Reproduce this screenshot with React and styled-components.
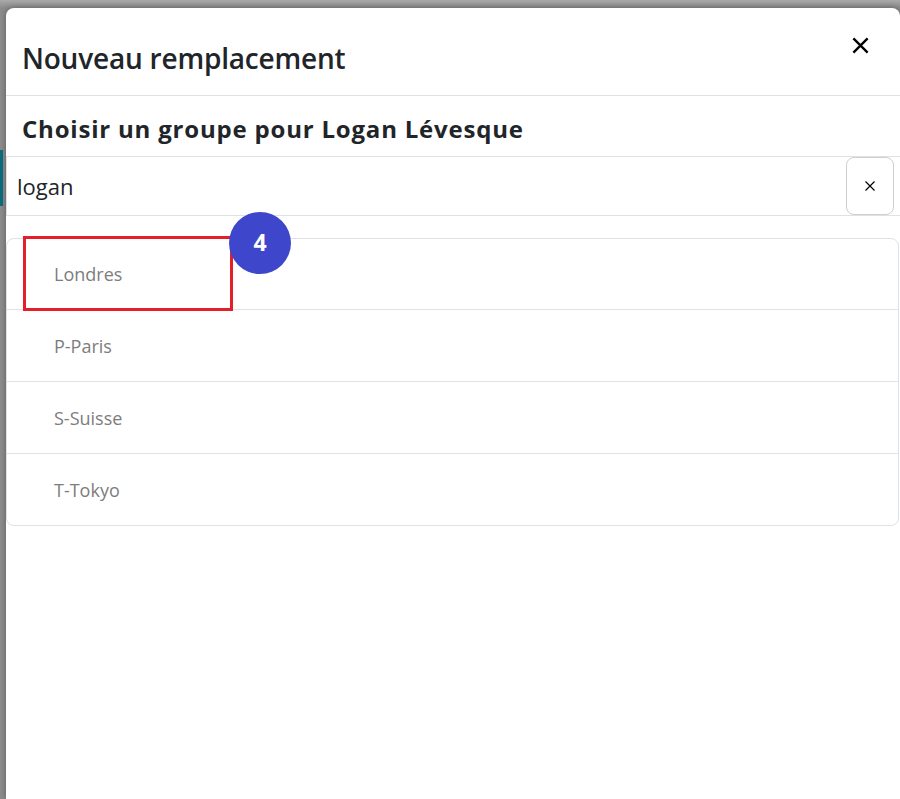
import React from "react";
import styled, { createGlobalStyle } from "styled-components";

const Global = createGlobalStyle`
  html, body { margin: 0; padding: 0; height: 100%; }
  body { font-family: "Open Sans", "Noto Sans", sans-serif; overflow: hidden; }
  #root { height: 100%; }
`;

const Backdrop = styled.div`
  position: relative;
  height: 100vh;
  box-sizing: border-box;
  background: linear-gradient(180deg, #a9a9a9 0px, #8c8c8c 8px);
  padding: 8px 0 0 6px;
  overflow: hidden;
`;

const SideAccent = styled.div`
  position: absolute;
  left: 0;
  top: 150px;
  width: 3px;
  height: 56px;
  background: #0b6d80;
`;

const Modal = styled.div`
  position: relative;
  height: 100%;
  background: #fff;
  border-radius: 8px 8px 0 0;
  box-shadow: 0 0 6px rgba(0, 0, 0, 0.35);
  display: flex;
  flex-direction: column;
`;

const Header = styled.div`
  height: 88px;
  box-sizing: border-box;
  border-bottom: 1px solid #dee2e6;
  display: flex;
  align-items: center;
  justify-content: space-between;
  padding: 0 28px 0 16px;
`;

const Title = styled.h1`
  margin: 0;
  padding-top: 12px;
  font-size: 28px;
  font-weight: 600;
  letter-spacing: -0.2px;
  color: #212529;
`;

const CloseButton = styled.button`
  border: none;
  background: none;
  padding: 0;
  width: 24px;
  height: 24px;
  display: flex;
  align-items: center;
  justify-content: center;
  cursor: pointer;
  margin-top: -12px;
`;

const Subtitle = styled.h2`
  margin: 0;
  height: 60px;
  box-sizing: border-box;
  display: flex;
  align-items: center;
  padding: 4px 16px 0;
  font-size: 24px;
  font-weight: 700;
  letter-spacing: 0.8px;
  color: #212529;
`;

const SearchGroup = styled.div`
  position: relative;
  height: 60px;
  box-sizing: border-box;
  border: 1px solid #dee2e6;
  border-right: none;
  display: flex;
  align-items: center;
`;

const SearchInput = styled.input`
  border: none;
  outline: none;
  flex: 1;
  height: 100%;
  padding: 0 10px;
  font-family: inherit;
  font-size: 22px;
  color: #212529;
  background: transparent;
`;

const ClearButton = styled.button`
  position: absolute;
  right: 6px;
  top: 0;
  width: 48px;
  height: 58px;
  box-sizing: border-box;
  border: 1px solid #cfcfcf;
  border-radius: 8px;
  background: #fff;
  display: flex;
  align-items: center;
  justify-content: center;
  padding: 0;
  cursor: pointer;
`;

const List = styled.ul`
  position: relative;
  list-style: none;
  margin: 22px 1px 0 0;
  padding: 0;
  border: 1px solid #dee2e6;
  border-radius: 8px;
`;

const Item = styled.li`
  height: ${(p) => (p.$first ? "70px" : "72px")};
  box-sizing: border-box;
  display: flex;
  align-items: center;
  padding-left: 47px;
  font-size: 18px;
  color: #7d7d7d;
  border-top: ${(p) => (p.$first ? "none" : "1px solid #dee2e6")};
`;

const Highlight = styled.div`
  position: absolute;
  left: 16px;
  top: -3px;
  width: 210px;
  height: 75px;
  box-sizing: border-box;
  border: 3px solid #e51f2a;
  pointer-events: none;
`;

const Badge = styled.div`
  position: absolute;
  left: 222px;
  top: -27px;
  width: 62px;
  height: 62px;
  border-radius: 50%;
  background: #3e47cb;
  color: #fff;
  font-size: 23px;
  font-weight: 700;
  display: flex;
  align-items: center;
  justify-content: center;
  padding-bottom: 2px;
  box-sizing: border-box;
`;

const XIcon = ({ size, stroke }) => (
  <svg width={size} height={size} viewBox="0 0 16 16" fill="none">
    <path d="M2 2 L14 14 M14 2 L2 14" stroke="#000" strokeWidth={stroke} strokeLinecap="butt" />
  </svg>
);

const groups = ["Londres", "P-Paris", "S-Suisse", "T-Tokyo"];

export default function App() {
  return (
    <>
      <Global />
      <Backdrop>
        <SideAccent />
        <Modal>
          <Header>
            <Title>Nouveau remplacement</Title>
            <CloseButton aria-label="Fermer">
              <XIcon size={19} stroke={2} />
            </CloseButton>
          </Header>
          <Subtitle>Choisir un groupe pour Logan Lévesque</Subtitle>
          <SearchGroup>
            <SearchInput defaultValue="logan" />
            <ClearButton aria-label="Effacer">
              <XIcon size={12} stroke={1.6} />
            </ClearButton>
          </SearchGroup>
          <List>
            {groups.map((g, i) => (
              <Item key={g} $first={i === 0}>
                {g}
              </Item>
            ))}
            <Highlight />
            <Badge>4</Badge>
          </List>
        </Modal>
      </Backdrop>
    </>
  );
}
